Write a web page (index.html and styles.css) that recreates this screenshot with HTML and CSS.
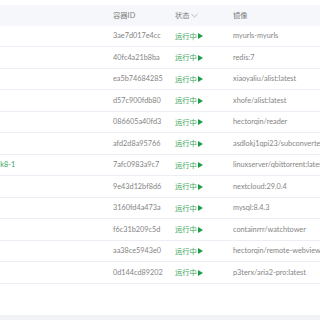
FILE: index.html
```html
<!DOCTYPE html>
<html lang="zh-CN">
<head>
    <meta charset="UTF-8">
    <title>容器</title>
    <link rel="stylesheet" href="styles.css">
</head>
<body>
    <div class="panel">
        <table class="containers">
            <colgroup>
                <col class="c-name">
                <col class="c-id">
                <col class="c-state">
                <col class="c-image">
            </colgroup>
            <thead>
                <tr>
                    <th></th>
                    <th>容器ID</th>
                    <th>状态<svg class="chev" viewBox="0 0 8 5" width="7" height="5"><path d="M0.5 0.8 L4 4.2 L7.5 0.8" fill="none" stroke="#9a9a9a" stroke-width="0.8"/></svg></th>
                    <th>镜像</th>
                </tr>
            </thead>
            <tbody>
                <tr><td></td><td>3ae7d017e4cc</td><td class="run">运行中<i class="play"></i></td><td>myurls-myurls</td></tr>
                <tr><td></td><td>40fc4a21b8ba</td><td class="run">运行中<i class="play"></i></td><td>redis:7</td></tr>
                <tr><td></td><td>ea5b74684285</td><td class="run">运行中<i class="play"></i></td><td>xiaoyaliu/alist:latest</td></tr>
                <tr><td></td><td>d57c900fdb80</td><td class="run">运行中<i class="play"></i></td><td>xhofe/alist:latest</td></tr>
                <tr><td></td><td>086605a40fd3</td><td class="run">运行中<i class="play"></i></td><td>hectorqin/reader</td></tr>
                <tr><td></td><td>afd2d8a95766</td><td class="run">运行中<i class="play"></i></td><td>asdlokj1qpi23/subconverter:latest</td></tr>
                <tr><td class="name"><span>4k8-1</span></td><td>7afc0983a9c7</td><td class="run">运行中<i class="play"></i></td><td>linuxserver/qbittorrent:latest</td></tr>
                <tr><td></td><td>9e43d12bf8d6</td><td class="run">运行中<i class="play"></i></td><td>nextcloud:29.0.4</td></tr>
                <tr><td></td><td>3160fd4a473a</td><td class="run">运行中<i class="play"></i></td><td>mysql:8.4.3</td></tr>
                <tr><td></td><td>f6c31b209c5d</td><td class="run">运行中<i class="play"></i></td><td>containrrr/watchtower</td></tr>
                <tr><td></td><td>aa38ce5943e0</td><td class="run">运行中<i class="play"></i></td><td>hectorqin/remote-webview</td></tr>
                <tr><td></td><td>0d144cd89202</td><td class="run">运行中<i class="play"></i></td><td>p3terx/aria2-pro:latest</td></tr>
            </tbody>
        </table>
    </div>
    <div class="foot"></div>
</body>
</html>
```
FILE: styles.css
```css
body {
    margin: 0;
    padding: 0;
    width: 320px;
    height: 320px;
    overflow: hidden;
    background-color: #fff;
    font-family: Lato, 'Noto Sans CJK SC', sans-serif;
    color: #858585;
}
.panel {
    height: 315px;
    padding-top: 5px;
    box-sizing: border-box;
    overflow: hidden;
}
.containers {
    border-collapse: collapse;
    table-layout: fixed;
    width: 380px;
    font-size: 7.3px;
}
.c-name { width: 107px; }
.c-id { width: 62px; }
.c-state { width: 58px; }
.c-image { width: 153px; }
.containers th,
.containers td {
    padding: 0 6px;
    height: 20.5px;
    text-align: left;
    white-space: nowrap;
    overflow: hidden;
    border-bottom: 1px solid #ebeef5;
}
.containers th {
    background-color: #f5f7fa;
    color: #7d7d7d;
    font-weight: normal;
    border-bottom: none;
}
.chev {
    margin-left: 1px;
    vertical-align: 0;
}
.run {
    color: #3aa55a;
}
.play {
    display: inline-block;
    width: 0;
    height: 0;
    margin-left: 1px;
    border-top: 3px solid transparent;
    border-bottom: 3px solid transparent;
    border-left: 5px solid #1f9d45;
    vertical-align: -0.5px;
}
.name span {
    display: block;
    margin-left: -10px;
    color: #3aa55a;
}
.foot {
    height: 5px;
    background-color: #f0f2f5;
}
```
